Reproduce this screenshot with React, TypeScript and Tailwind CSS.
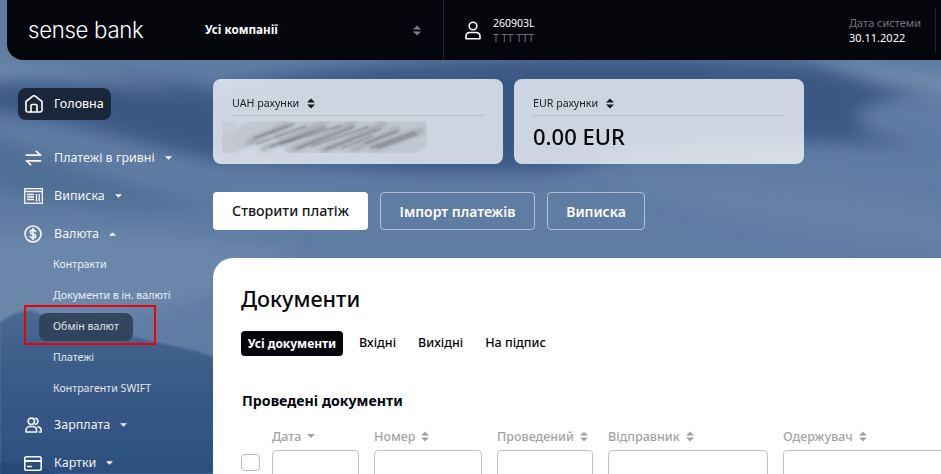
import React from 'react';

const font = 'font-["Noto_Sans","Open_Sans",sans-serif]';

const Sort = ({ className = '' }: { className?: string }) => (
  <svg viewBox="0 0 8 11" className={`h-[11px] w-[8px] shrink-0 ${className}`} fill="currentColor">
    <path d="M4 0.5 8 4.5H0ZM0 6.5H8L4 10.5Z" />
  </svg>
);

const Caret = ({ up = false }: { up?: boolean }) => (
  <svg viewBox="0 0 8 4" className="ml-[10px] h-[4px] w-[7px] shrink-0" fill="currentColor">
    <path d={up ? 'M4 0 8 4H0Z' : 'M0 0H8L4 4Z'} />
  </svg>
);

const stroke = {
  fill: 'none',
  stroke: 'currentColor',
  strokeWidth: 1.6,
  strokeLinecap: 'round' as const,
  strokeLinejoin: 'round' as const,
};

const HomeIcon = () => (
  <svg viewBox="0 0 18 18" className="h-[18px] w-[18px]" {...stroke}>
    <path d="M1 6.500 7.800 1.200a2 2 0 0 1 2.400 0L17 6.500v8.500a2 2 0 0 1-2 2H3a2 2 0 0 1-2-2Z" />
    <path d="M6 17v-6.500a1 1 0 0 1 1-1h4a1 1 0 0 1 1 1V17" />
  </svg>
);
const SwapIcon = () => (
  <svg viewBox="0 0 18 16" className="h-[16px] w-[17px]" {...stroke} strokeWidth={1.9}>
    <path d="M1.500 5H16.500L12 1M16.500 11H1.500L6 15" />
  </svg>
);
const PaperIcon = () => (
  <svg viewBox="0 0 19 16" className="-ml-[1px] h-[16px] w-[19px]" fill="none" stroke="currentColor" strokeWidth="1.3">
    <rect x="0.700" y="0.700" width="17.600" height="14.600" />
    <path d="M1 3.500h17M3 6.500h7M3 9h7M3 11.500h7M12.500 6v7.500M15.200 6v7.500" />
  </svg>
);
const DollarIcon = () => (
  <svg viewBox="0 0 18 18" className="h-[18px] w-[18px]" {...stroke}>
    <circle cx="9" cy="9" r="8" />
    <path d="M11.600 6.500C11.200 5.500 10.200 5 9 5 7.500 5 6.400 5.800 6.400 7s1 1.700 2.600 2c1.600.3 2.600.9 2.600 2.100 0 1.200-1.100 1.900-2.600 1.900-1.300 0-2.300-.5-2.700-1.500M9 3.500V14.500" />
  </svg>
);
const UsersIcon = () => (
  <svg viewBox="0 0 17 16" className="h-[16px] w-[17px]" {...stroke}>
    <circle cx="6.300" cy="4.300" r="3.200" />
    <path d="M1 15v-1.600C1 11 3 9.500 5 9.500h2.600c2.200 0 4 1.500 4 3.900V15ZM10.500 1.200a3.200 3.200 0 0 1 0 6.200M13 9.800c2 .4 3.200 1.800 3.200 3.700V15h-2" />
  </svg>
);
const CardIcon = () => (
  <svg viewBox="0 0 18 15" className="-ml-[1px] h-[15px] w-[18px]" {...stroke}>
    <rect x="0.800" y="0.800" width="16.400" height="13.400" rx="1.800" />
    <path d="M1 5h16" strokeWidth="2" />
    <path d="M3.500 10.500h4" />
  </svg>
);
const UserIcon = () => (
  <svg viewBox="0 0 16 19" className="h-[19px] w-[16px]" {...stroke}>
    <circle cx="8" cy="5" r="3.800" />
    <path d="M1 17.800v-2.300c0-2.700 2-4 4-4h6c2 0 4 1.300 4 4v2.300Z" />
  </svg>
);

const Backdrop = () => (
  <svg viewBox="0 0 941 474" preserveAspectRatio="none" className="absolute inset-0 h-full w-full">
    <defs>
      <linearGradient id="ridge" x1="0" y1="0" x2="0" y2="1">
        <stop offset="0" stopColor="#4a6a91" />
        <stop offset="0.35" stopColor="#3c5d89" />
        <stop offset="1" stopColor="#2c4f7f" />
      </linearGradient>
      <filter id="soft" x="-20%" y="-50%" width="140%" height="200%">
        <feGaussianBlur stdDeviation="9" />
      </filter>
      <filter id="soft2">
        <feGaussianBlur stdDeviation="0.800" />
      </filter>
    </defs>
    <rect width="941" height="474" fill="#5f7ca3" />
    <path d="M-40 60C80 62 150 78 215 90 300 62 600 50 720 60 800 66 880 60 980 80 880 95 780 120 940 150 800 130 640 150 560 170 400 178 300 160 215 160 120 140 50 110-40 110Z" fill="#3a5884" filter="url(#soft)" />
    <path d="M-20 52C60 60 120 70 190 88 120 86 60 78-20 84Z" fill="#6c88aa" filter="url(#soft)" />
    <path d="M800 50C860 60 900 62 960 70L960 100C900 92 850 78 800 50Z" fill="#6f8bac" filter="url(#soft)" />
    <path d="M-20 130C60 160 120 190 240 210 60 210 20 200-20 180Z" fill="#4f6e95" filter="url(#soft)" />
    <path d="M-20 240C80 220 200 240 300 250 200 320 60 330-20 330Z" fill="#6a87aa" filter="url(#soft)" />
    <path d="M600 170C720 190 840 180 960 215V250C840 240 720 220 600 170Z" fill="#6582a5" filter="url(#soft)" />
    <path d="M0 322 14 314 30 310 45 316 60 318 76 326 100 326 125 335 150 341 178 347 200 352 216 358V474H0Z" fill="url(#ridge)" filter="url(#soft2)" />
    <path d="M0 462 40 466 70 480H0Z" fill="#274874" filter="url(#soft2)" />
  </svg>
);

const Blurred = () => (
  <svg viewBox="0 0 205 32" className="-ml-[10px] mt-[5px] h-[32px] w-[205px]">
    <defs>
      <filter id="smear1">
        <feGaussianBlur stdDeviation="2.500" />
      </filter>
      <filter id="smear2">
        <feGaussianBlur stdDeviation="1.100" />
      </filter>
    </defs>
    <path d="M0 14 30 0H205V24L195 32H65L50 12 12 32H0Z" fill="#b9bec8" opacity="0.6" filter="url(#smear2)" />
    <path d="M0 0H14V32H0Z" fill="#c4c9d2" opacity="0.6" />
    <g stroke="#8b8e94" strokeWidth="4" strokeLinecap="round" filter="url(#smear1)" opacity="0.75">
      <path d="M26 22 66 4M40 28 102 3M70 29 132 3M100 30 162 3M130 29 176 8M150 28 200 9" />
    </g>
    <g stroke="#5a5d63" strokeWidth="1.300" strokeLinecap="round" filter="url(#smear2)" opacity="0.8">
      <path d="M32 17 72 3M34 23 84 5M48 26 104 6M58 23 118 5M76 27 132 6M90 25 146 6M104 28 158 8M120 27 150 15M150 26 192 11M156 27 196 13M164 24 190 15M144 22 176 10" />
    </g>
  </svg>
);

const CardBox = ({ label, children }: { label: string; children: React.ReactNode }) => (
  <div className="h-[85px] w-[290px] rounded-lg bg-white/75 px-[19px] pt-[14px] text-[#1a1c22] backdrop-blur-sm">
    <div className="flex h-[23px] items-center gap-[8px] border-b border-[#b9bdc6] pb-[1px] text-[10.700px]">
      <span>{label}</span>
      <Sort className="text-[#15171c]" />
    </div>
    {children}
  </div>
);

const mainMenu = [
  { icon: <SwapIcon />, label: 'Платежі в гривні' },
  { icon: <PaperIcon />, label: 'Виписка' },
];
const subMenu = ['Контракти', 'Документи в ін. валюті', 'Обмін валют', 'Платежі', 'Контрагенти SWIFT'];
const bottomMenu = [
  { icon: <UsersIcon />, label: 'Зарплата' },
  { icon: <CardIcon />, label: 'Картки' },
];

const MenuRow = ({ icon, label }: { icon: React.ReactNode; label: string }) => (
  <div className="flex h-[38px] items-center pl-[25px] text-[12.500px] text-white/95">
    <span className="flex w-[29px] shrink-0 items-center">{icon}</span>
    <span>{label}</span>
    <Caret />
  </div>
);

const Sidebar = () => (
  <aside className="w-[213px] shrink-0 pt-[28px]">
    <div className="ml-[18px] flex h-[32px] w-[93px] items-center rounded-lg bg-[#1a263a] pl-[7px] text-[12.500px] text-white">
      <span className="flex w-[29px] items-center">
        <HomeIcon />
      </span>
      Головна
    </div>
    <div className="mt-[19px]">
      {mainMenu.map((m) => (
        <MenuRow key={m.label} icon={m.icon} label={m.label} />
      ))}
    </div>
    <div className="flex h-[34px] items-center pl-[24px] pt-[4px] text-[12.500px] text-white/95">
      <span className="flex w-[30px] shrink-0 items-center">
        <DollarIcon />
      </span>
      <span>Валюта</span>
      <Caret up />
    </div>
    <div className="text-[10.600px] text-white/85">
      {subMenu.map((s) =>
        s === 'Обмін валют' ? (
          <div key={s} className="flex h-[31px] items-center pl-[39px]">
            <span className="flex h-[28px] w-[94px] items-center rounded-lg bg-[#2e3f58]/90 pl-[14px]">{s}</span>
          </div>
        ) : (
          <div key={s} className="flex h-[31px] items-center pl-[53px]">
            {s}
          </div>
        ),
      )}
    </div>
    <div className="mt-[2px]">
      {bottomMenu.map((m) => (
        <MenuRow key={m.label} icon={m.icon} label={m.label} />
      ))}
    </div>
  </aside>
);

const filters = [
  { label: 'Дата', w: 'w-[87px]', caret: true },
  { label: 'Номер', w: 'w-[108px]' },
  { label: 'Проведений', w: 'w-[96px]' },
  { label: 'Відправник', w: 'w-[160px]' },
  { label: 'Одержувач', w: 'w-[180px]' },
];

const App = () => {
  return (
    <div className={`relative h-[474px] w-[941px] overflow-hidden ${font}`}>
      <Backdrop />
      <div className="relative flex h-full flex-col">
        <header className="ml-[7px] flex h-[60px] shrink-0 items-center rounded-bl-2xl bg-[#05060c] text-white">
          <div className="w-[198px] pl-[21px] font-['Inter',sans-serif] text-[22.200px] font-light leading-none tracking-[-0.3px]">sense bank</div>
          <div className="flex w-[239px] items-center justify-between self-stretch border-r border-[#22242b] pr-[22px] text-[11.700px] font-bold">
            <span>Усі компанії</span>
            <Sort className="text-[#7b7e86]" />
          </div>
          <div className="flex flex-1 items-center pl-[21px]">
            <UserIcon />
            <div className="ml-[12px] mt-[1px] text-[10.500px] leading-[15px]">
              <div>260903L</div>
              <div className="text-[#6d6f76]">T TT TTT</div>
            </div>
          </div>
          <div className="mr-[5px] flex h-[46px] w-[87px] flex-col justify-center border-r border-[#22242b] text-[11px] leading-[15px]">
            <div className="text-[#72747b]">Дата системи</div>
            <div>30.11.2022</div>
          </div>
        </header>

        <div className="flex min-h-0 flex-1">
          <Sidebar />
          <main className="flex-1 pt-[19px]">
            <div className="flex gap-[11px]">
              <CardBox label="UAH рахунки">
                <Blurred />
              </CardBox>
              <CardBox label="EUR рахунки">
                <div className="mt-[5px] text-[22px] font-medium leading-[30px] text-[#05060c]">0.00 EUR</div>
              </CardBox>
            </div>

            <div className="mt-[28px] flex gap-[12px] text-[14px]">
              <button className="h-[38px] w-[155px] rounded bg-white text-[14.200px] font-medium text-[#15171c]">Створити платіж</button>
              <button className="h-[38px] w-[155px] rounded border border-white/50 font-semibold text-white">Імпорт платежів</button>
              <button className="h-[38px] w-[98px] rounded border border-white/50 font-semibold text-white">Виписка</button>
            </div>

            <section className="mt-[28px] h-[300px] rounded-tl-[20px] bg-white pl-[28px] pt-[25px] text-[#05060c]">
              <h1 className="text-[21.600px] font-medium leading-[32px]">Документи</h1>
              <div className="mt-[16px] flex h-[25px] items-center text-[12.500px] font-medium">
                <span className="flex h-[25px] w-[102px] items-center justify-center rounded bg-[#05060c] text-[12px] font-bold text-white">Усі документи</span>
                <span className="ml-[16px]">Вхідні</span>
                <span className="ml-[22px]">Вихідні</span>
                <span className="ml-[22px]">На підпис</span>
              </div>
              <h2 className="ml-[1px] mt-[35px] text-[14.200px] font-bold leading-[20px]">Проведені документи</h2>
              <div className="ml-[1px] mt-[19px] flex items-start gap-[15px]">
                <span className="-ml-[1px] -mr-[3px] mt-[24px] h-[17px] w-[19px] shrink-0 rounded border border-[#bdbdbd]" />
                {filters.map((f) => (
                  <div key={f.label} className={`${f.w} shrink-0`}>
                    <div className="flex h-[20px] items-center gap-[6px] pb-[5px] text-[12.500px] font-medium text-[#a3a3a3]">
                      {f.label}
                      {f.caret ? (
                        <svg viewBox="0 0 8 4" className="mb-[4px] h-[4px] w-[8px]" fill="currentColor">
                          <path d="M0 0H8L4 4Z" />
                        </svg>
                      ) : (
                        <Sort className="mb-[2px]" />
                      )}
                    </div>
                    <div className="h-[28px] rounded border border-[#c4c4c4]" />
                  </div>
                ))}
              </div>
            </section>
          </main>
        </div>
      </div>

      {/* red highlight drawn over the screenshot */}
      <div className="absolute left-[24px] top-[305px] h-[40px] w-[132px] border-2 border-[#f00000]" />
    </div>
  );
};

export default App;
